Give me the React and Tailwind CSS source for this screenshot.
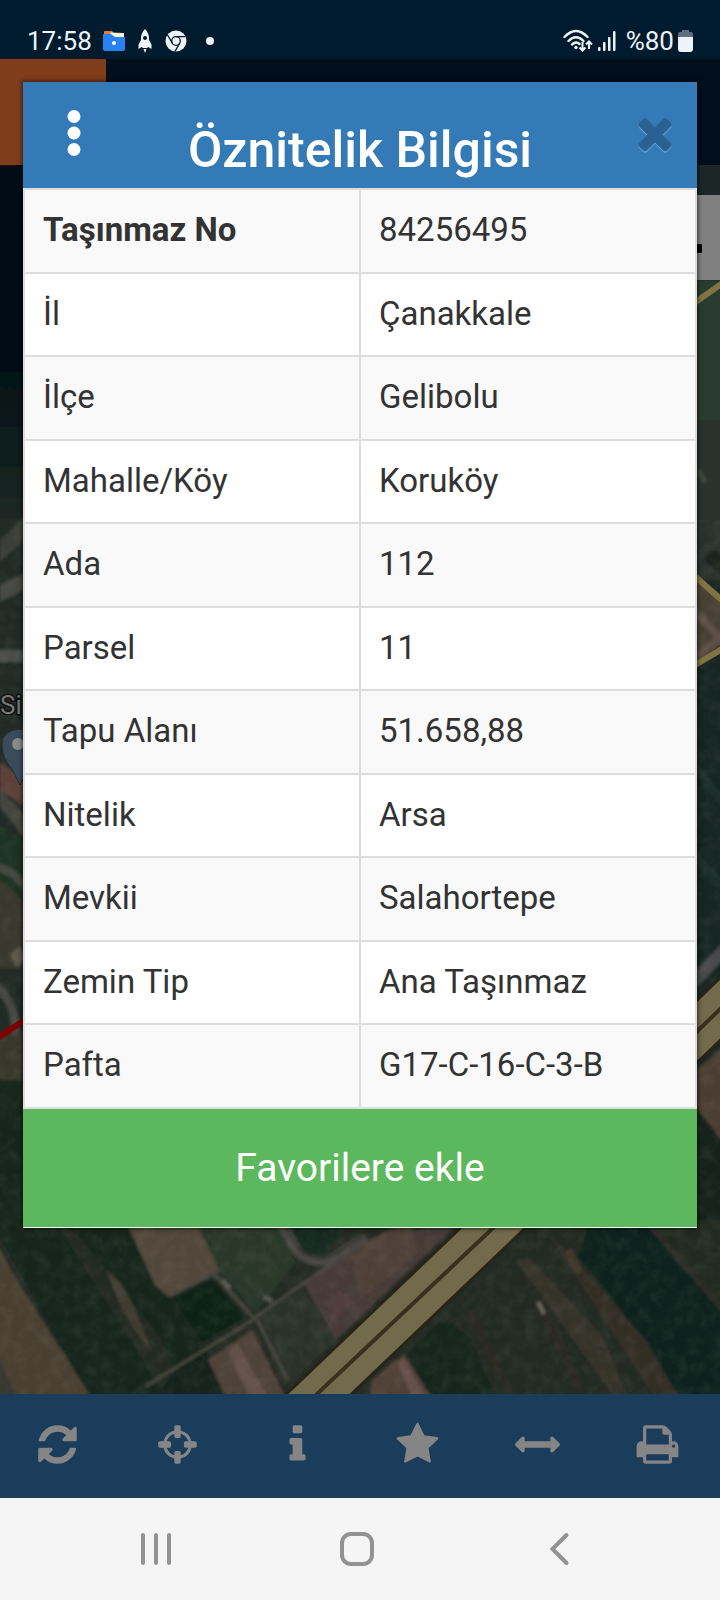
import React from "react";

const ROWS = [
  ["Taşınmaz No", "84256495"],
  ["İl", "Çanakkale"],
  ["İlçe", "Gelibolu"],
  ["Mahalle/Köy", "Koruköy"],
  ["Ada", "112"],
  ["Parsel", "11"],
  ["Tapu Alanı", "51.658,88"],
  ["Nitelik", "Arsa"],
  ["Mevkii", "Salahortepe"],
  ["Zemin Tip", "Ana Taşınmaz"],
  ["Pafta", "G17-C-16-C-3-B"],
];

const TIMES =
  "M1490 1322q0 40-28 68l-136 136q-28 28-68 28t-68-28l-294-294-294 294q-28 28-68 28t-68-28l-136-136q-28-28-28-68t28-68l294-294-294-294q-28-28-28-68t28-68l136-136q28-28 68-28t68 28l294 294 294-294q28-28 68-28t68 28l136 136q28 28 28 68t-28 68l-294 294 294 294q28 28 28 68z";

const TOOLS = [
  {
    label: "Yenile",
    d: "M1639 1056q0 5-1 7-64 268-268 434.5t-478 166.5q-146 0-282.5-55t-243.5-157l-129 129q-19 19-45 19t-45-19-19-45v-448q0-26 19-45t45-19h448q26 0 45 19t19 45-19 45l-137 137q71 66 161 102t187 36q134 0 250-65t186-179q11-17 53-117 8-23 30-23h192q13 0 22.5 9.5t9.5 22.5zm25-800v448q0 26-19 45t-45 19h-448q-26 0-45-19t-19-45 19-45l138-138q-148-137-349-137-134 0-250 65t-186 179q-11 17-53 117-8 23-30 23h-199q-13 0-22.5-9.5t-9.5-22.5v-7q65-268 270-434.5t480-166.5q146 0 284 55.5t245 156.5l130-129q19-19 45-19t45 19 19 45z",
  },
  {
    label: "Konumum",
    d: "M1325 1024h-109q-26 0-45-19t-19-45v-128q0-26 19-45t45-19h109q-32-108-112.5-188.5t-188.5-112.5v109q0 26-19 45t-45 19h-128q-26 0-45-19t-19-45v-109q-108 32-188.5 112.5t-112.5 188.5h109q26 0 45 19t19 45v128q0 26-19 45t-45 19h-109q32 108 112.5 188.5t188.5 112.5v-109q0-26 19-45t45-19h128q26 0 45 19t19 45v109q108-32 188.5-112.5t112.5-188.5zm339-192v128q0 26-19 45t-45 19h-143q-37 161-154.5 278.5t-278.5 154.5v143q0 26-19 45t-45 19h-128q-26 0-45-19t-19-45v-143q-161-37-278.5-154.5t-154.5-278.5h-143q-26 0-45-19t-19-45v-128q0-26 19-45t45-19h143q37-161 154.5-278.5t278.5-154.5v-143q0-26 19-45t45-19h128q26 0 45 19t19 45v143q161 37 278.5 154.5t154.5 278.5h143q26 0 45 19t19 45z",
  },
  {
    label: "Bilgi",
    d: "M1216 1344v128q0 26-19 45t-45 19h-512q-26 0-45-19t-19-45v-128q0-26 19-45t45-19h64v-384h-64q-26 0-45-19t-19-45v-128q0-26 19-45t45-19h384q26 0 45 19t19 45v576h64q26 0 45 19t19 45zm-128-1152v192q0 26-19 45t-45 19h-256q-26 0-45-19t-19-45v-192q0-26 19-45t45-19h256q26 0 45 19t19 45z",
  },
  {
    label: "Favoriler",
    d: "M1728 647q0 22-26 48l-363 354 86 500q1 7 1 20 0 21-10.5 35.5t-30.5 14.5q-19 0-40-12l-449-236-449 236q-22 12-40 12-21 0-31.5-14.5t-10.5-35.5q0-6 2-20l86-500-364-354q-25-27-25-48 0-37 56-46l502-73 225-455q19-41 49-41t49 41l225 455 502 73q56 9 56 46z",
  },
  {
    label: "Ölçüm",
    d: "M1792 896q0 26-19 45l-256 256q-19 19-45 19t-45-19-19-45v-128h-1024v128q0 26-19 45t-45 19-45-19l-256-256q-19-19-19-45t19-45l256-256q19-19 45-19t45 19 19 45v128h1024v-128q0-26 19-45t45-19 45 19l256 256q19 19 19 45z",
  },
  {
    label: "Yazdır",
    d: "M448 1536h896v-256h-896v256zm0-640h896v-384h-160q-40 0-68-28t-28-68v-160h-640v640zm1152 64q0-26-19-45t-45-19-45 19-19 45 19 45 45 19 45-19 19-45zm128 0v416q0 13-9.5 22.5t-22.5 9.5h-224v160q0 40-28 68t-68 28h-960q-40 0-68-28t-28-68v-160h-224q-13 0-22.5-9.5t-9.5-22.5v-416q0-79 56.5-135.5t135.5-56.5h64v-544q0-40 28-68t68-28h672q40 0 88 20t76 48l152 152q28 28 48 76t20 88v256h64q79 0 135.5 56.5t56.5 135.5z",
  },
];

function StatusBar() {
  return (
    <header className="flex h-[59px] items-end justify-between bg-[#001a2e] px-[27px] pb-[3px] text-[#edf3f8]">
      <div className="flex h-[30px] items-center">
        <time className="w-[75px] text-[26px] leading-[30px]">17:58</time>
        <svg className="h-[22px] w-6" viewBox="0 0 24 22" aria-hidden="true">
          <path d="M2 2q0-1 1-1h7l2 2h10v10H2z" fill="#e07b3c" />
          <path d="M8 2.500l13 .5q1 0 1 1v6H9z" fill="#fff3dc" />
          <path d="M1 5q0-1 1-1h7l4 3h9q1 0 1 1v11q0 2-2 2H3q-2 0-2-2z" fill="#2783f4" />
          <circle cx="12" cy="13" r="2" fill="#fff" />
        </svg>
        <svg className="ml-3 h-6 w-[14px]" viewBox="0 0 14 24" aria-hidden="true">
          <path fill="currentColor" fillRule="evenodd" d="M7 0Q2.400 4.500 3 11L.5 15.500V20l3.200-2 1.300 1h4l1.300-1 3.200 2v-4.500L11 11Q11.600 4.500 7 0zM7 7a2 2 0 1 1 0 4 2 2 0 0 1 0-4zM5.500 20h3L7 24z" />
        </svg>
        <svg className="ml-[13px] h-[22px] w-[22px]" viewBox="0 0 22 22" aria-hidden="true">
          <circle cx="11" cy="11" r="10.500" fill="currentColor" />
          <circle cx="11" cy="11" r="4.300" fill="none" stroke="#001a2e" strokeWidth="1.300" />
          <path d="M11 6.700h9.500M7.300 13.200 2.500 5M14.700 13.200 10 21.400" stroke="#001a2e" strokeWidth="1.300" />
        </svg>
        <span className="ml-[19px] h-2 w-2 rounded-full bg-current" />
      </div>
      <div className="flex h-[30px] items-center">
        <svg className="h-6 w-[30px]" viewBox="0 0 30 24" fill="none" stroke="currentColor" aria-hidden="true">
          <path d="M1.500 8Q13 -4 24.500 8M5.500 12Q13 4.500 20.500 12M9 15.500Q13 12 16.500 15" strokeWidth="2.400" strokeLinecap="round" />
          <circle cx="13" cy="18.500" r="1.700" fill="currentColor" stroke="none" />
          <path d="M19.500 13v8M16.500 18.500l3 3 3-3M26 20v-7M23 15.500l3-3 3 3" strokeWidth="2" />
        </svg>
        <svg className="ml-[5px] h-5 w-5" viewBox="0 0 20 20" fill="currentColor" aria-hidden="true">
          <rect x="0" y="16" width="2.500" height="4" rx="1" />
          <rect x="5" y="11" width="2.500" height="9" rx="1" />
          <rect x="10" y="6" width="2.500" height="14" rx="1" />
          <rect x="15" y="0" width="2.500" height="20" rx="1" />
        </svg>
        <span className="ml-2 text-[26px] leading-[30px]">%80</span>
        <svg className="ml-1 h-[22px] w-[15px]" viewBox="0 0 15 22" aria-hidden="true">
          <path d="M4 0h7v2h2q2 0 2 2v4H0V4q0-2 2-2h2z" fill="#5d6f7c" />
          <path d="M0 7h15v12q0 3-3 3H3q-3 0-3-3z" fill="currentColor" />
        </svg>
      </div>
    </header>
  );
}

function MapBackground() {
  return (
    <svg
      className="absolute inset-0 h-full w-full"
      viewBox="0 59 720 1335"
      preserveAspectRatio="xMidYMin slice"
      aria-hidden="true"
    >
      <defs>
        <linearGradient id="sea" x1="0" y1="0" x2="0" y2="1">
          <stop offset="0" stopColor="#020a14" />
          <stop offset="0.5" stopColor="#020c14" />
          <stop offset="0.8" stopColor="#0b1c1c" />
          <stop offset="1" stopColor="#202824" />
        </linearGradient>
        <filter id="soft" x="-5%" y="-5%" width="110%" height="110%">
          <feGaussianBlur stdDeviation="1.5" />
        </filter>
        <filter id="grain" x="0" y="0" width="100%" height="100%">
          <feTurbulence type="fractalNoise" baseFrequency="0.08" numOctaves="3" seed="4" />
          <feColorMatrix values="0 0 0 0 0.4  0 0 0 0 0.38  0 0 0 0 0.33  1.600 0 0 0 -0.62" />
        </filter>
      </defs>
      <rect y="59" width="720" height="1335" fill="#1b2722" />

      <g filter="url(#soft)">
        {/* west shore */}
        <rect x="-10" y="150" width="40" height="370" fill="url(#sea)" />
        <rect x="-10" y="518" width="40" height="722" fill="#222a26" />
        <path d="M0 540l30-28v22L0 562z" fill="#3b3c38" />
        <path d="M0 585l30-14v16L0 602z" fill="#454643" />
        <path d="M-5 650h35v12H-5z" fill="#4a4b4a" />
        <path d="M0 762l24 18v26L0 790z" fill="#5c4039" />
        <path d="M0 790l30 30v26L0 806z" fill="#454540" />
        <path d="M-5 825q23 8 35 24v50H-5z" fill="#1b3024" />
        <path d="M-5 866q23 6 35 28M-5 985q25 20 19 60" stroke="#454642" strokeWidth="8" fill="none" />
        <path d="M-5 878q19 8 31 30v60H-5z" fill="#37372d" />
        <path d="M10 954l10-8 6 12-10 10z" fill="#5b574a" />
        <path d="M-5 1040l29-10v100H-5z" fill="#38382b" />
        <path d="M-5 1080h35v160H-5z" fill="#17281f" />

        {/* east fields */}
        <path d="M690 165h40v40h-40z" fill="#1f2827" />
        <path d="M690 280h40v150h-40z" fill="#2a3a32" />
        <path d="M690 420h40v160h-40z" fill="#2b302d" />
        <path d="M698 470l7 12" stroke="#474a44" strokeWidth="4" fill="none" />
        <path d="M704 560q8-12 18-8v24z" fill="#1a221f" />
        <path d="M690 570l40 36v34l-40 30z" fill="#4a4034" />
        <path d="M690 606l34 36M690 660l34-24" stroke="#5c5046" strokeWidth="7" />
        <path d="M690 672l40-24v324h-40z" fill="#132622" />
        <path d="M690 760l34 44M690 850l34 38" stroke="#1d2f29" strokeWidth="8" />
        <path d="M690 986l36-38" stroke="#4a4a4b" strokeWidth="12" />
        <path d="M690 1075l40-34v110l-40-50z" fill="#4b3d33" />
        <path d="M690 1100l40 50v100h-40z" fill="#17221f" />

        {/* southern fields */}
        <path d="M-5 1227h730v175H-5z" fill="#222a22" />
        <path d="M0 1220h125l75 110-10 70H92L-5 1230z" fill="#15251e" />
        <path d="M-5 1240l19 36 79 124H16L-5 1360z" fill="#4a3f33" />
        <path d="M-5 1350l23 50H-5z" fill="#383830" />
        <path d="M55 1220l25 17 80 100 28 63h-20z" fill="#202a22" />
        <path d="M106 1270q18 12 30 42l16 40-18-22q-16-26-28-60z" fill="#413a32" />
        <path d="M125 1220h70l24 49-50 28-14-12z" fill="#51463a" />
        <path d="M195 1220h82l18 43-40 50-14-18-22-26z" fill="#2a3829" />
        <path d="M174 1298l38-19 34 38-44 26z" fill="#112119" />
        <path d="M178 1362l26-16 24 56h-74z" fill="#12221a" />
        <path d="M208 1360l44-30 36 72h-60z" fill="#504239" />
        <path d="M228 1352l24 50h18l-32-58z" fill="#64514a" />
        <path d="M256 1320l46-33 36 52-54 48z" fill="#2c322b" />
        <path d="M304 1284l58-40 90-24 10 0-126 120z" fill="#473b38" />
        <path d="M338 1290l-8 32 26-20z" fill="#513d3a" />
        <path d="M280 1220h70l-26 35-14 4z" fill="#182a20" />
        <path d="M350 1250l60-30 8 33-58 46z" fill="#504138" />
        <path d="M170 1296l50-26M212 1272l42 46M254 1318l100-70M146 1386l110-68M256 1318l32 62" stroke="#46463d" strokeWidth="3" fill="none" />
        <path d="M222 1280l8 8M264 1297l8 4" stroke="#5c5c52" strokeWidth="4" />
        <path d="M278 1218l18 32q14 16 36 9l34-22" stroke="#484543" strokeWidth="10" fill="none" />
        <path d="M280 1218l18 30q14 14 34 8l32-21" stroke="#2c2d2b" strokeWidth="2" fill="none" />

        <path d="M523 1220h207v180H360l40-51z" fill="#242923" />
        <path d="M408 1352l36-34 26 20 28 64h-66z" fill="#14271f" />
        <path d="M372 1380l32-26 30 48h-64z" fill="#514238" />
        <path d="M398 1364l16 38h14l-24-44z" fill="#66504a" />
        <path d="M590 1220h60l80 101v81h-48l-64-96-40-50z" fill="#11241f" />
        <path d="M516 1260l14-2 72 78 28 66h-12z" fill="#35322a" />
        <path d="M548 1234l26 24 70 80 38 64h-24z" fill="#302f28" />
        <path d="M646 1220l84 98" stroke="#2b2c28" strokeWidth="6" />
        <path d="M470 1310l44 92M540 1300l40 90" stroke="#2b2c24" strokeWidth="8" />
        <path d="M538 1302l6 12" stroke="#67665b" strokeWidth="4" />
        <path d="M568 1250l12 22" stroke="#43382c" strokeWidth="7" />
      </g>
      <rect y="520" width="720" height="874" filter="url(#grain)" opacity="0.12" />

      {/* dual carriageway */}
      <g fill="none">
        <path d="M298 1414L493 1228 740 990" stroke="#292418" strokeWidth="48" />
        <path d="M298 1414L493 1228 740 990" stroke="#716a4b" strokeWidth="42" />
        <path d="M298 1412L493 1228 740 990" stroke="#3a2f1c" strokeWidth="4" />
      </g>
      <path d="M690 306l34-24M690 572l34 30M690 668l34-20" stroke="#807443" strokeWidth="6" />
      <path d="M-4 1039L28 1018" stroke="#7d0303" strokeWidth="6" />

      {/* place marker and its label */}
      <path d="M2 745q0-16 20-16 18 0 18 16 0 14-12 24l-8 16-8-16Q2 759 2 745z" fill="#3a4b5a" stroke="#232c33" strokeWidth="1" />
      <circle cx="18" cy="744" r="6" fill="#8a8a86" />
      <text x="0" y="714" fontFamily="Roboto, sans-serif" fontSize="26" fill="#777" stroke="#101010" strokeWidth="3" paintOrder="stroke">
        Si
      </text>

      {/* page header and search strip behind the dialog */}
      <rect y="59" width="720" height="106" fill="#000f1b" />
      <rect y="59" width="106" height="106" fill="#803d1c" />
      <rect x="640" y="195" width="80" height="85" fill="#808080" />
      <rect x="694" y="244" width="8" height="9" rx="1" fill="#000" />
    </svg>
  );
}

function Dialog() {
  return (
    <section
      role="dialog"
      aria-labelledby="dialog-title"
      className="relative mx-[23px] mt-[23px] bg-white pb-px shadow-[0_0_4px_1px_rgba(0,0,0,0.6)]"
    >
      <div className="grid h-[106px] grid-cols-[102px_1fr_102px] items-start bg-[#337ab7]">
        <button type="button" aria-label="Menü" className="flex h-[102px] items-center justify-center">
          <svg className="h-[48px] w-[14px]" viewBox="0 0 14 48" fill="#fff">
            <circle cx="7" cy="7.500" r="6.500" />
            <circle cx="7" cy="24" r="6.500" />
            <circle cx="7" cy="40.500" r="6.500" />
          </svg>
        </button>
        <h1 id="dialog-title" className="pt-8 text-center text-[50px] font-medium leading-[72px] whitespace-nowrap text-white">
          Öznitelik Bilgisi
        </h1>
        <button type="button" aria-label="Kapat" className="flex h-[102px] items-center justify-end pr-[17px]">
          <svg className="h-[50px] w-[50px]" viewBox="0 0 1792 1792">
            <path d={TIMES} fill="#6a9fce" transform="translate(0 48)" />
            <path d={TIMES} fill="#296292" />
          </svg>
        </button>
      </div>
      <table className="w-full table-fixed border-collapse text-[33px] leading-[40px] text-[#333]">
        <tbody>
          {ROWS.map(([name, value], i) => (
            <tr key={name} className="h-[83px] odd:h-[84px] odd:bg-[#f9f9f9]">
              <th
                scope="row"
                className={
                  i === 0
                    ? "border-2 border-[#ddd] px-[18px] pb-[2px] text-left font-bold"
                    : "border-2 border-[#ddd] px-[18px] pb-[2px] text-left font-normal"
                }
              >
                {name}
              </th>
              <td className="border-2 border-[#ddd] px-[18px] pb-[2px]">{value}</td>
            </tr>
          ))}
        </tbody>
      </table>
      <button type="button" className="block h-[118px] w-full bg-[#5cb85c] text-[39px] text-white">
        Favorilere ekle
      </button>
    </section>
  );
}

function Toolbar() {
  return (
    <nav aria-label="Harita araçları" className="grid h-[104px] grid-cols-6 bg-[#1a3d5c]">
      {TOOLS.map((tool) => (
        <button key={tool.label} type="button" aria-label={tool.label} className="flex items-center justify-center pr-[5px] pb-[3px]">
          <svg className="h-[45px] w-[45px]" viewBox="0 0 1792 1792" fill="#858585">
            <path d={tool.d} />
          </svg>
        </button>
      ))}
    </nav>
  );
}

function SystemNav() {
  return (
    <nav aria-label="Sistem" className="grid h-[102px] grid-cols-3 bg-[#f5f5f5] pl-[54px] pr-[60px]">
      <button type="button" aria-label="Son uygulamalar" className="flex items-center justify-center">
        <svg className="h-9 w-9" viewBox="0 0 36 36" stroke="#929292" strokeWidth="4" strokeLinecap="round">
          <path d="M6 4v28M19 4v28M32 4v28" />
        </svg>
      </button>
      <button type="button" aria-label="Ana ekran" className="flex items-center justify-center">
        <svg className="h-9 w-9" viewBox="0 0 36 36" fill="none" stroke="#929292" strokeWidth="4">
          <rect x="3" y="3" width="30" height="30" rx="9" />
        </svg>
      </button>
      <button type="button" aria-label="Geri" className="flex items-center justify-center">
        <svg className="h-9 w-9" viewBox="0 0 36 36" fill="none" stroke="#929292" strokeWidth="4" strokeLinecap="round">
          <path d="M25.500 4L11.500 18l14 14" />
        </svg>
      </button>
    </nav>
  );
}

export default function App() {
  return (
    <div className="flex min-h-screen flex-col bg-[#001a2e] font-[Roboto,sans-serif]">
      <StatusBar />
      <main className="relative flex-1 overflow-hidden pb-10">
        <MapBackground />
        <Dialog />
      </main>
      <Toolbar />
      <SystemNav />
    </div>
  );
}
